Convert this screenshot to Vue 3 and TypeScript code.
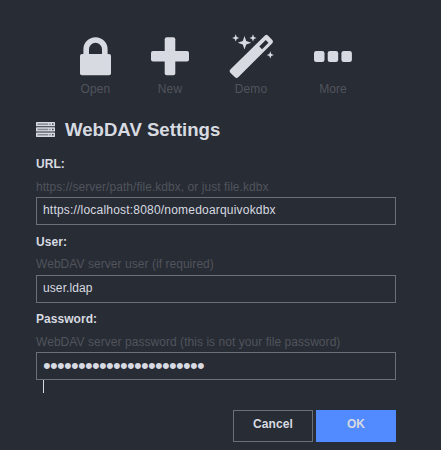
<script setup lang="ts">
import { ref } from 'vue'

interface Field {
  id: string
  label: string
  hint: string
  value: string
  secret?: boolean
}

const fields = ref<Field[]>([
  { id: 'url', label: 'URL:', hint: 'https://server/path/file.kdbx, or just file.kdbx', value: 'https://localhost:8080/nomedoarquivokdbx' },
  { id: 'user', label: 'User:', hint: 'WebDAV server user (if required)', value: 'user.ldap' },
  { id: 'password', label: 'Password:', hint: 'WebDAV server password (this is not your file password)', value: '•'.repeat(23), secret: true },
])
</script>

<template>
  <main class="screen">
    <nav class="actions">
      <div class="action open">
        <svg width="31" height="39" viewBox="0 0 31 39">
          <path d="M6.2 19V12.3a9.3 9.3 0 0 1 18.6 0V19" fill="none" stroke="currentColor" stroke-width="5.6" />
          <rect x="0" y="17" width="31" height="21.3" rx="2" fill="currentColor" />
        </svg>
        <span>Open</span>
      </div>
      <div class="action new">
        <svg width="38" height="39" viewBox="0 0 38 39">
          <rect x="13.7" y=".3" width="10.6" height="38" rx="2" fill="currentColor" />
          <rect x="0" y="14" width="38" height="10.6" rx="2" fill="currentColor" />
        </svg>
        <span>New</span>
      </div>
      <div class="action demo">
        <svg class="wand" width="46" height="46" viewBox="0 0 46 46">
          <path fill="currentColor" fill-rule="evenodd" d="M36.7 2.7Q38.3 1 39.9 2.6L44.3 7Q45.9 8.6 44.3 10.2L10.2 44.3Q8.6 45.8 7 44.3L2.3 39.7Q.7 38.1 2.3 36.5ZM37.7 7L31.3 13.4 34.1 16.2 40.5 9.8Z" />
          <g fill="currentColor">
            <path d="M16.5 3L18.2 8.1 23.3 9.8 18.2 11.5 16.5 16.6 14.8 11.5 9.7 9.8 14.8 8.1Z" />
            <path d="M7.7 1.3L8.7 3.9 11.3 4.9 8.7 5.9 7.7 8.5 6.7 5.9 4.1 4.9 6.7 3.9Z" />
            <path d="M25 1.3L26 3.9 28.6 4.9 26 5.9 25 8.5 24 5.9 21.4 4.9 24 3.9Z" />
            <path d="M42.3 18.3L43.3 20.9 45.9 21.9 43.3 22.9 42.3 25.5 41.3 22.9 38.7 21.9 41.3 20.9Z" />
          </g>
        </svg>
        <span>Demo</span>
      </div>
      <div class="action more">
        <svg width="38" height="39" viewBox="0 0 38 39">
          <g fill="currentColor">
            <rect x="0" y="14" width="10.5" height="11" rx="2.3" />
            <rect x="13.7" y="14" width="10.5" height="11" rx="2.3" />
            <rect x="27.4" y="14" width="10.5" height="11" rx="2.3" />
          </g>
        </svg>
        <span>More</span>
      </div>
    </nav>

    <h1 class="title">
      <svg width="19" height="15" viewBox="0 0 19 15">
        <g v-for="row in 3" :key="row" :transform="`translate(0 ${(row - 1) * 5.3})`">
          <rect width="19" height="4.3" rx=".6" fill="#d7dae0" />
          <rect x="1.4" y="1.4" width="10.8" height="1.5" fill="#858992" />
          <rect x="13.2" y="1.4" width="1.5" height="1.5" fill="#858992" />
          <rect x="16.1" y="1.4" width="1.4" height="1.5" fill="#34373e" />
        </g>
      </svg>
      <span>WebDAV Settings</span>
    </h1>

    <form class="form" @submit.prevent>
      <div v-for="field in fields" :key="field.id" class="field" :class="field.id">
        <div class="label">{{ field.label }}</div>
        <div class="hint">{{ field.hint }}</div>
        <div class="box">
          <span :class="{ secret: field.secret }">{{ field.value }}</span>
          <i v-if="field.secret" class="caret"></i>
        </div>
      </div>
      <div class="buttons">
        <button type="button">Cancel</button>
        <button type="submit" class="primary">OK</button>
      </div>
    </form>
  </main>
</template>

<style>
body {
  background: #282c34;
}
</style>

<style scoped>
.screen {
  box-sizing: border-box;
  width: 441px;
  height: 450px;
  overflow: hidden;
  background: #282c34;
  color: #d7dae0;
  font-family: "Liberation Sans", Arial, sans-serif;
  font-size: 12px;
}
.actions {
  display: flex;
  height: 117px;
  padding-left: 59px;
  box-sizing: border-box;
}
.action {
  display: flex;
  flex-direction: column;
  align-items: center;
  justify-content: flex-start;
  padding-top: 37px;
}
.action svg {
  display: block;
  flex: none;
  overflow: visible;
}
.action span {
  margin-top: 5px;
  line-height: 16px;
  letter-spacing: 0.1px;
  color: #50545d;
}
.open { width: 73px; }
.new { width: 76px; }
.demo { width: 86px; }
.more { width: 78px; }
.action .wand {
  margin-top: -4.4px;
  margin-bottom: -2.6px;
}
.title {
  display: flex;
  align-items: center;
  gap: 10px;
  margin: 0 0 0 36px;
  height: 24px;
  font-size: 18.6px;
  line-height: 25px;
}
.form {
  width: 360px;
  margin-left: 36px;
  padding-top: 14px;
}
.field {
  height: 77.5px;
}
.label {
  height: 18px;
  line-height: 18px;
  font-weight: bold;
  letter-spacing: 0.05px;
}
.hint {
  margin-top: 4.75px;
  height: 19.25px;
  line-height: 19px;
  letter-spacing: 0.05px;
  color: #50545d;
  white-space: nowrap;
}
.box {
  position: relative;
  box-sizing: border-box;
  height: 28px;
  padding-left: 6px;
  border: 1px solid #6c6f76;
  line-height: 24.6px;
  letter-spacing: 0.2px;
}
.user .box {
  letter-spacing: 0.1px;
}
.secret {
  display: block;
  font-size: 22px;
  line-height: 25px;
  letter-spacing: -0.7px;
}
.caret {
  position: absolute;
  left: 6px;
  top: 27px;
  width: 1px;
  height: 13px;
  background: #d7dae0;
}
.buttons {
  display: flex;
  justify-content: flex-end;
  gap: 3px;
  padding-top: 22px;
}
button {
  box-sizing: border-box;
  width: 80px;
  height: 32px;
  padding: 0 0 4px;
  border: 1px solid #6c6f76;
  border-radius: 0;
  background: transparent;
  color: #d7dae0;
  font: bold 12px "Liberation Sans", Arial, sans-serif;
  letter-spacing: 0.1px;
}
button.primary {
  border-color: #528bff;
  background: #528bff;
}
</style>
